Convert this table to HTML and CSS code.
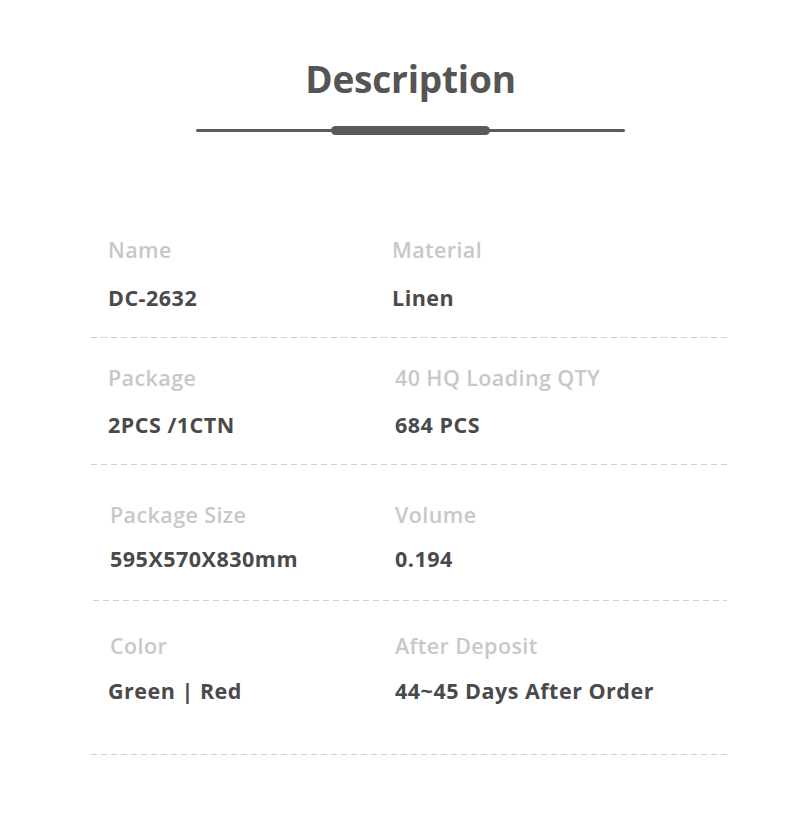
FILE: index.html
```html
<!DOCTYPE html>
<html>
<head>
<meta charset="utf-8">
<link rel="stylesheet" href="styles.css">
</head>
<body>
<div class="page">
  <header class="head">
    <h1 class="title">Description</h1>
    <div class="rule"><span class="rule-thick"></span></div>
  </header>
  <section class="specs">
    <div class="row row-1">
      <div class="cell"><div class="label">Name</div><div class="value">DC-2632</div></div>
      <div class="cell"><div class="label">Material</div><div class="value">Linen</div></div>
    </div>
    <div class="row row-2">
      <div class="cell"><div class="label">Package</div><div class="value">2PCS /1CTN</div></div>
      <div class="cell"><div class="label">40 HQ Loading QTY</div><div class="value">684 PCS</div></div>
    </div>
    <div class="row row-3">
      <div class="cell"><div class="label">Package Size</div><div class="value">595X570X830mm</div></div>
      <div class="cell"><div class="label">Volume</div><div class="value">0.194</div></div>
    </div>
    <div class="row row-4">
      <div class="cell"><div class="label">Color</div><div class="value">Green | Red</div></div>
      <div class="cell"><div class="label">After Deposit</div><div class="value">44~45 Days After Order</div></div>
    </div>
  </section>
</div>
</body>
</html>
```
FILE: styles.css
```css
html, body {
  margin: 0;
  padding: 0;
  background: #ffffff;
}
body {
  font-family: "Open Sans", "Noto Sans", sans-serif;
  width: 800px;
  height: 831px;
  overflow: hidden;
}
.page {
  padding-top: 54px;
}
.head {
  display: flex;
  flex-direction: column;
  align-items: center;
  padding-left: 21px;
}
.title {
  margin: 0;
  font-size: 37px;
  line-height: 50px;
  font-weight: 700;
  color: #555555;
  letter-spacing: -0.2px;
}
.rule {
  margin-top: 25px;
  width: 429px;
  height: 3px;
  border-radius: 2px;
  background: #5a5a5a;
  display: flex;
  align-items: center;
  justify-content: center;
}
.rule-thick {
  display: block;
  width: 159px;
  height: 9px;
  border-radius: 5px;
  background: #5a5a5a;
}
.specs {
  margin: 104px 0 0 91px;
  width: 636px;
}
.row {
  display: grid;
  grid-template-columns: 287px 1fr;
  padding-left: 17px;
  background-image: repeating-linear-gradient(90deg, #cfcfcf 0 6px, transparent 6px 10px);
  background-size: 100% 1px;
  background-repeat: no-repeat;
  background-position: left bottom;
}
.cell {
  display: flex;
  flex-direction: column;
}
.label {
  font-size: 21.5px;
  line-height: 28px;
  font-weight: 600;
  letter-spacing: 0.4px;
  color: #c8c8c8;
  white-space: nowrap;
}
.value {
  font-size: 21.5px;
  line-height: 28px;
  font-weight: 700;
  letter-spacing: 0.5px;
  color: #4a4a4a;
  white-space: nowrap;
}
.row-1 { padding-top: 0; padding-bottom: 26px; }
.row-1 .value { margin-top: 20px; }
.row-1 .cell + .cell { margin-left: -3px; }
.row-2 { padding-top: 26px; padding-bottom: 26px; }
.row-2 .value { margin-top: 19px; }
.row-3 { padding-top: 36px; padding-bottom: 28px; margin-left: 2px; }
.row-3 .value { margin-top: 16px; }
.row-3 .cell + .cell { margin-left: -2px; }
.row-4 { padding-top: 31px; padding-bottom: 50px; }
.row-4 .value { margin-top: 17px; }
.row-4 .cell:first-child .label { margin-left: 2px; }
```
